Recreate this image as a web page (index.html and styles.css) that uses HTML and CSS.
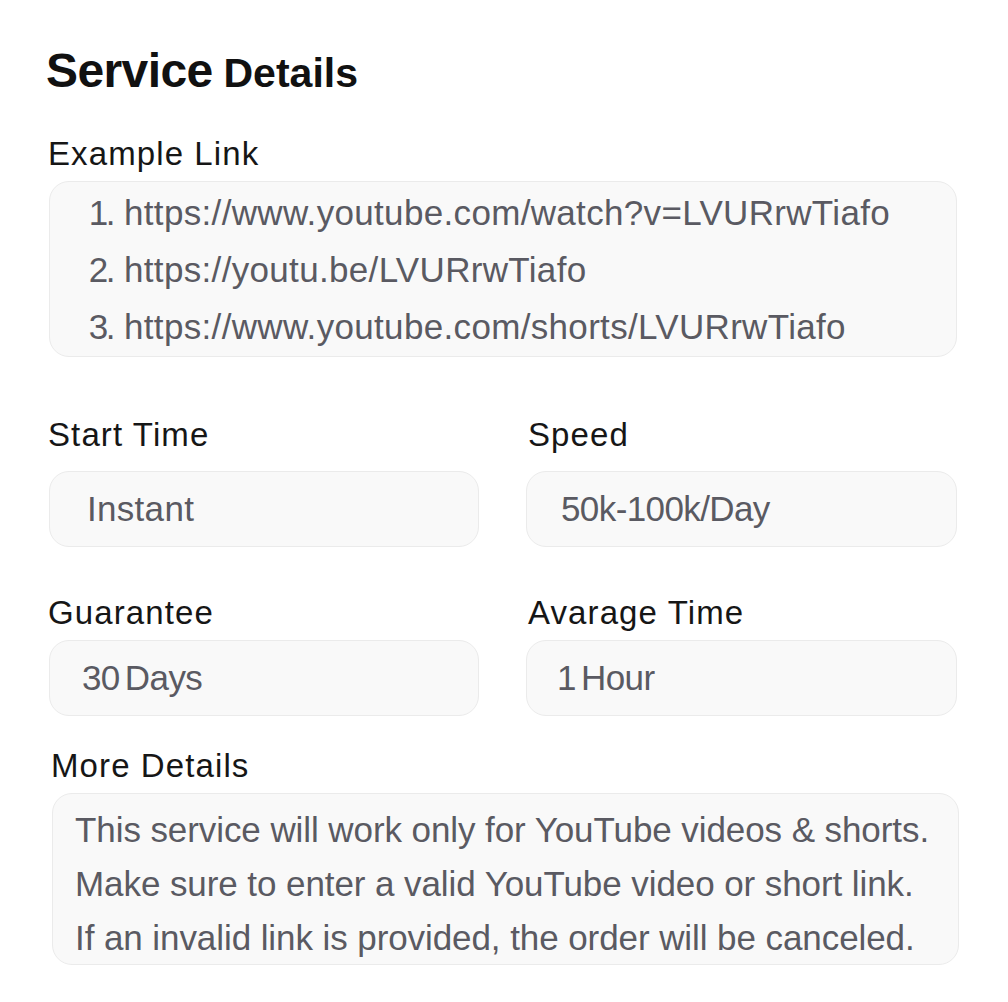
FILE: index.html
```html
<!DOCTYPE html>
<html lang="en">
<head>
<meta charset="utf-8">
<title>Service Details</title>
<link rel="stylesheet" href="styles.css">
</head>
<body>
<main class="page">
  <h1 class="title"><span class="title-big">Service</span> <span class="title-small">Details</span></h1>

  <section class="block block-example">
    <div class="label">Example Link</div>
    <div class="box box-links">
      <ol class="links">
        <li>https://www.youtube.com/watch?v=LVURrwTiafo</li>
        <li>https://youtu.be/LVURrwTiafo</li>
        <li>https://www.youtube.com/shorts/LVURrwTiafo</li>
      </ol>
    </div>
  </section>

  <section class="grid grid-first">
    <div class="field">
      <div class="label label-gap">Start Time</div>
      <div class="box value pad-37">Instant</div>
    </div>
    <div class="field field-right">
      <div class="label label-gap">Speed</div>
      <div class="box value num pad-34">50k-100k/Day</div>
    </div>
  </section>

  <section class="grid grid-second">
    <div class="field">
      <div class="label">Guarantee</div>
      <div class="box value num pad-32">30 Days</div>
    </div>
    <div class="field field-right">
      <div class="label">Avarage Time</div>
      <div class="box value num pad-30">1 Hour</div>
    </div>
  </section>

  <section class="block block-more">
    <div class="label">More Details</div>
    <div class="box box-more">
      <p class="line">This service will work only for YouTube videos &amp; shorts.</p>
      <p class="line">Make sure to enter a valid YouTube video or short link.</p>
      <p class="line">If an invalid link is provided, the order will be canceled.</p>
    </div>
  </section>
</main>
</body>
</html>
```

FILE: styles.css
```css
* {
  box-sizing: border-box;
}

html, body {
  margin: 0;
  padding: 0;
  background: #ffffff;
}

body {
  font-family: "Liberation Sans", Arial, sans-serif;
  color: #141414;
}

.page {
  width: 1008px;
  padding: 43px 0 0 49px;
}

.title {
  margin: 0 0 0 -3px;
  height: 56px;
  line-height: 56px;
  font-weight: 700;
  color: #111111;
  white-space: nowrap;
}

.title-big {
  font-size: 48px;
  letter-spacing: -0.6px;
}

.title-small {
  font-size: 41px;
  margin-left: 2px;
}

.label {
  font-size: 33px;
  line-height: 40px;
  height: 40px;
  color: #161616;
  letter-spacing: 1.1px;
  margin-bottom: 7px;
  margin-left: -1px;
  white-space: nowrap;
}

.label-gap {
  margin-bottom: 16px;
}

.field-right .label {
  margin-left: 2px;
}

.box {
  background: #f9f9f9;
  border: 1.5px solid #ebebeb;
  border-radius: 20px;
  color: #5a5a62;
}

.block-example {
  margin-top: 35px;
  width: 908px;
}

.box-links {
  padding: 2px 0 0 0;
  height: 176px;
}

.links {
  margin: 0;
  padding: 0;
  list-style: none;
  counter-reset: item;
  font-size: 35px;
  line-height: 57px;
  white-space: nowrap;
}

.links li {
  counter-increment: item;
  letter-spacing: 0.33px;
}

.links li::before {
  content: counter(item) ".";
  display: inline-block;
  width: 63px;
  margin-right: 11px;
  text-align: right;
  letter-spacing: -2.5px;
}

.grid {
  display: grid;
  grid-template-columns: 430px 431px;
  column-gap: 47px;
  width: 908px;
}

.grid-first {
  margin-top: 58px;
}

.grid-second {
  margin-top: 46px;
}

.value {
  height: 76px;
  font-size: 35px;
  line-height: 73px;
  letter-spacing: 0.3px;
  white-space: nowrap;
}

.num {
  letter-spacing: -0.6px;
  word-spacing: -4px;
}

.pad-37 { padding-left: 37px; }
.pad-34 { padding-left: 34px; }
.pad-32 { padding-left: 32px; }
.pad-30 { padding-left: 30px; }

.block-more {
  margin-top: 30px;
}

.block-more .label {
  margin-left: 2px;
}

.box-more {
  margin-left: 3px;
  width: 907px;
  height: 172px;
  padding: 8.5px 0 0 22px;
}

.line {
  margin: 0;
  font-size: 35px;
  line-height: 54px;
  letter-spacing: -0.08px;
  white-space: nowrap;
}
```
